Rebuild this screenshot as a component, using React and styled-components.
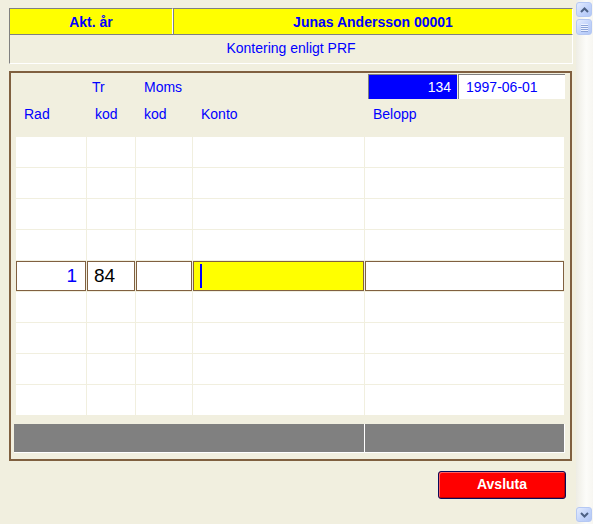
import React from "react";
import styled, { createGlobalStyle } from "styled-components";

const Global = createGlobalStyle`
  html, body { margin: 0; padding: 0; background: #F1EFDF; }
  #root { width: 593px; height: 524px; }
`;

const BEIGE = "#F1EFDF";
const BROWN = "#806040";

const Page = styled.div`
  display: flex;
  width: 593px;
  height: 524px;
  background: ${BEIGE};
  font-family: "Liberation Sans", Arial, sans-serif;
  overflow: hidden;
`;

const Content = styled.div`
  width: 576px;
  box-sizing: border-box;
  padding: 8px 3px 0 9px;
  display: flex;
  flex-direction: column;
`;

const HeaderRow = styled.div`
  display: grid;
  grid-template-columns: 164px 400px;
  height: 26px;
`;

const HeaderCell = styled.div`
  box-sizing: border-box;
  background: #ffff00;
  border-top: 1px solid #808080;
  border-left: 1px solid #808080;
  border-right: 1px solid #ffffff;
  display: flex;
  align-items: center;
  justify-content: center;
  font-weight: bold;
  font-size: 14px;
  color: #0000ff;
`;

const SubRow = styled.div`
  box-sizing: border-box;
  height: 30px;
  border-top: 1px solid #808080;
  border-left: 1px solid #808080;
  border-right: 1px solid #ffffff;
  border-bottom: 1px solid #ffffff;
  display: flex;
  align-items: center;
  justify-content: center;
  padding-bottom: 3px;
  font-size: 14px;
  color: #0000ff;
`;

const Panel = styled.div`
  box-sizing: border-box;
  margin-top: 7px;
  width: 563px;
  height: 390px;
  border: 2px solid ${BROWN};
  display: flex;
  flex-direction: column;
`;

const COLS = "70px 48px 56px 171px 199px";

const HeadGrid = styled.div`
  display: grid;
  grid-template-columns: ${COLS};
  grid-template-rows: 26px 27px;
  column-gap: 1px;
  margin: 1px 0 10px 5px;
`;

const Label = styled.div`
  grid-column: ${(p) => p.$col};
  grid-row: ${(p) => p.$row};
  display: flex;
  align-items: center;
  padding-left: ${(p) => p.$pad ?? 8}px;
  font-size: 14px;
  color: #0000ff;
`;

const BoxGroup = styled.div`
  grid-column: 5;
  grid-row: 1;
  display: flex;
  gap: 1px;
  margin: 0 -1px 1px 3px;
`;

const NumBox = styled.div`
  box-sizing: border-box;
  width: 89px;
  border-top: 1px solid #808080;
  border-left: 1px solid #808080;
  background: #0000ff;
  color: #ffffff;
  font-size: 14px;
  display: flex;
  align-items: center;
  justify-content: flex-end;
  padding-right: 6px;
`;

const DateBox = styled.div`
  box-sizing: border-box;
  width: 107px;
  border-top: 1px solid #808080;
  border-left: 1px solid #808080;
  background: #ffffff;
  color: #0000ff;
  font-size: 14px;
  display: flex;
  align-items: center;
  padding-left: 7px;
`;

const Table = styled.div`
  display: grid;
  grid-template-columns: ${COLS};
  grid-auto-rows: 30px;
  gap: 1px;
  margin-left: 5px;
  width: 548px;
  background: ${BEIGE};
`;

const Cell = styled.div`
  background: #ffffff;
`;

const InputCell = styled.div`
  box-sizing: border-box;
  border: 1px solid ${BROWN};
  background: ${(p) => (p.$active ? "#ffff00" : "#ffffff")};
  color: ${(p) => p.$color || "#000000"};
  font-size: 19px;
  display: flex;
  align-items: center;
  justify-content: ${(p) => (p.$right ? "flex-end" : "flex-start")};
  padding: ${(p) => (p.$right ? "0 8px 0 0" : "0 0 0 6px")};
`;

const Caret = styled.span`
  display: block;
  width: 2px;
  height: 24px;
  background: #0000ff;
`;

const Footer = styled.div`
  display: grid;
  grid-template-columns: 351px 200px;
  height: 29px;
  margin: 9px 0 0 3px;
`;

const FooterCell = styled.div`
  background: #808080;
  border-right: 1px solid #ffffff;
  border-bottom: 1px solid #ffffff;
`;

const ButtonRow = styled.div`
  display: flex;
  justify-content: flex-end;
  margin: 10px 7px 0 0;
`;

const ExitButton = styled.button`
  box-sizing: border-box;
  width: 128px;
  height: 28px;
  background: #ff0000;
  border: 1px solid #0a0a5a;
  border-radius: 3px;
  box-shadow: inset 1px 1px 0 #ff6060, inset -1px -1px 0 #c00000;
  color: #ffffff;
  font-family: "Liberation Sans", Arial, sans-serif;
  font-weight: bold;
  font-size: 14px;
  padding: 0 0 3px 0;
  cursor: pointer;
`;

const ScrollBar = styled.div`
  width: 17px;
  box-sizing: border-box;
  padding: 2px 1px 2px 0;
  display: flex;
  flex-direction: column;
  background: linear-gradient(to right, #EEEDE5, #FCFCF9 60%, #F7F6F1);
`;

const ScrollButton = styled.div`
  box-sizing: border-box;
  width: 16px;
  height: 15px;
  border: 1px solid #B5C8F3;
  border-radius: 3px;
  background: linear-gradient(135deg, #E4ECFE, #C3D4FB 55%, #B2C7F5);
  display: flex;
  align-items: center;
  justify-content: center;
`;

const Thumb = styled(ScrollButton)`
  margin-top: 2px;
  height: 16px;
  flex-direction: column;
  gap: 1px;
`;

const Grip = styled.span`
  display: block;
  width: 7px;
  height: 1px;
  background: #EEF3FF;
  box-shadow: 0 1px 0 #8CA4D8;
`;

const Spacer = styled.div`
  flex: 1;
`;

const Chevron = ({ down }) => (
  <svg width="9" height="6" viewBox="0 0 9 6">
    <path
      d={down ? "M1 1 L4.5 4.5 L8 1" : "M1 5 L4.5 1.5 L8 5"}
      fill="none"
      stroke="#4D6185"
      strokeWidth="2"
    />
  </svg>
);

const ROWS = 9;
const ACTIVE = 4;

export default function App() {
  const rows = [];
  for (let r = 0; r < ROWS; r++) {
    if (r === ACTIVE) {
      rows.push(
        <InputCell key={`a${r}`} $right $color="#0000ff">1</InputCell>,
        <InputCell key={`b${r}`}>84</InputCell>,
        <InputCell key={`c${r}`} />,
        <InputCell key={`d${r}`} $active>
          <Caret />
        </InputCell>,
        <InputCell key={`e${r}`} />
      );
    } else {
      for (let c = 0; c < 5; c++) rows.push(<Cell key={`${r}-${c}`} />);
    }
  }

  return (
    <Page>
      <Global />
      <Content>
        <HeaderRow>
          <HeaderCell>Akt. år</HeaderCell>
          <HeaderCell>Junas Andersson 00001</HeaderCell>
        </HeaderRow>
        <SubRow>Kontering enligt PRF</SubRow>
        <Panel>
          <HeadGrid>
            <Label $col={2} $row={1} $pad={5}>Tr</Label>
            <Label $col={3} $row={1}>Moms</Label>
            <BoxGroup>
              <NumBox>134</NumBox>
              <DateBox>1997-06-01</DateBox>
            </BoxGroup>
            <Label $col={1} $row={2}>Rad</Label>
            <Label $col={2} $row={2}>kod</Label>
            <Label $col={3} $row={2}>kod</Label>
            <Label $col={4} $row={2}>Konto</Label>
            <Label $col={5} $row={2}>Belopp</Label>
          </HeadGrid>
          <Table>{rows}</Table>
          <Footer>
            <FooterCell />
            <FooterCell />
          </Footer>
        </Panel>
        <ButtonRow>
          <ExitButton>Avsluta</ExitButton>
        </ButtonRow>
      </Content>
      <ScrollBar>
        <ScrollButton>
          <Chevron />
        </ScrollButton>
        <Thumb>
          <Grip />
          <Grip />
          <Grip />
          <Grip />
        </Thumb>
        <Spacer />
        <ScrollButton>
          <Chevron down />
        </ScrollButton>
      </ScrollBar>
    </Page>
  );
}
